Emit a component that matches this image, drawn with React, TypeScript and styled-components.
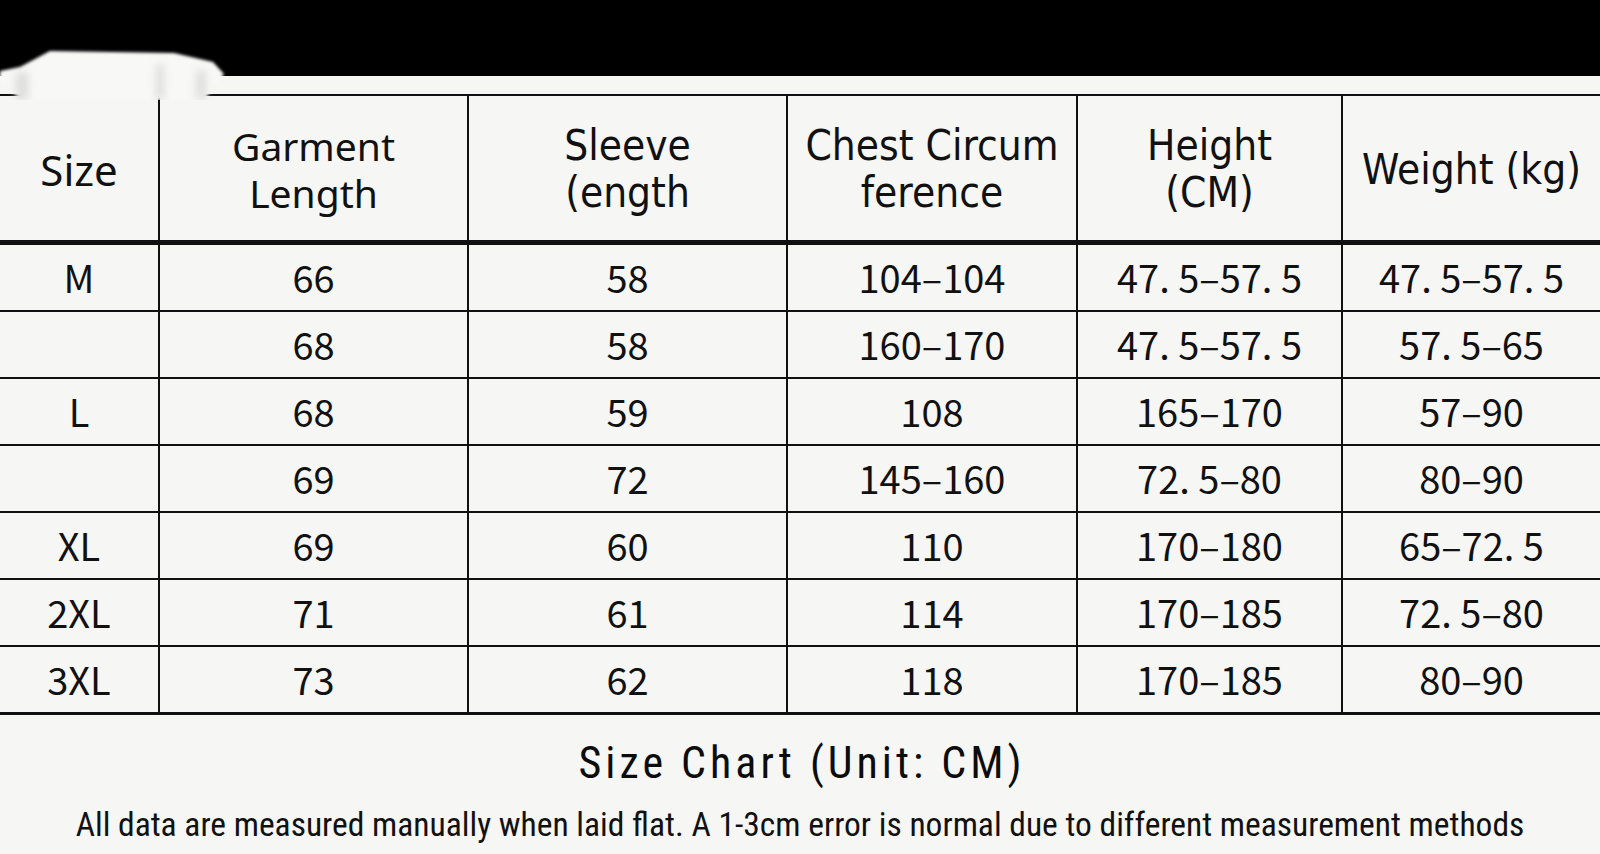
import React from "react";
import styled, { createGlobalStyle } from "styled-components";

const GlobalStyle = createGlobalStyle`
  html, body {
    margin: 0;
    padding: 0;
    background: #f6f6f4;
  }
  body {
    font-family: "Noto Sans", "Liberation Sans", sans-serif;
    color: #111;
  }
`;

const Page = styled.div`
  position: relative;
  width: 1600px;
  height: 854px;
  overflow: hidden;
  background: #f6f6f4;
  display: flex;
  flex-direction: column;
`;

const TopBand = styled.div`
  height: 76px;
  background: #000;
  flex: none;
`;

const Blob = styled.svg`
  position: absolute;
  left: 0;
  top: 44px;
  width: 240px;
  height: 56px;
`;

const Table = styled.div`
  margin-top: 18px;
  border-top: 2px solid #111;
  display: grid;
  grid-template-columns: 160px 309px 319px 290px 265px 1fr;
`;

const HeadCell = styled.div<{ $condensed?: boolean; $big?: boolean; $last?: boolean }>`
  box-sizing: border-box;
  height: 149px;
  border-bottom: 5px solid #111;
  border-right: ${(p) => (p.$last ? "none" : "2px solid #111")};
  display: flex;
  align-items: center;
  justify-content: center;
  text-align: center;
  padding-top: 2px;
  font-family: ${(p) =>
    p.$condensed
      ? `"DejaVu Sans Condensed", "DejaVu Sans", sans-serif`
      : `"Noto Sans", "Open Sans", sans-serif`};
  font-stretch: ${(p) => (p.$condensed ? "condensed" : "normal")};
  font-size: ${(p) => (p.$big ? "42px" : p.$condensed ? "42px" : "39px")};
  line-height: 47px;
  white-space: pre-line;
  color: #111;
`;

const Cell = styled.div<{ $lastRow?: boolean; $last?: boolean }>`
  box-sizing: border-box;
  height: ${(p) => (p.$lastRow ? "68px" : "67px")};
  border-bottom: ${(p) => (p.$lastRow ? "3px" : "2px")} solid #111;
  border-right: ${(p) => (p.$last ? "none" : "2px solid #111")};
  display: flex;
  align-items: center;
  justify-content: center;
  padding-bottom: 2px;
  font-family: "Noto Sans CJK JP", "Noto Sans", sans-serif;
  font-size: 38px;
  line-height: 1;
  white-space: pre;
  color: #111;
`;

const Footer = styled.div`
  display: flex;
  flex-direction: column;
  align-items: center;
`;

const Title = styled.div`
  margin-top: 24px;
  padding-left: 4px;
  font-family: "Roboto Condensed", "DejaVu Sans Condensed", sans-serif;
  font-weight: 400;
  font-size: 44px;
  letter-spacing: 4px;
  line-height: 48px;
  color: #0c0c0c;
  white-space: pre;
`;

const Note = styled.div`
  margin-top: 18px;
  font-family: "Roboto Condensed", "DejaVu Sans Condensed", sans-serif;
  font-size: 33.5px;
  line-height: 40px;
  color: #111;
  white-space: nowrap;
`;

const headers: { text: string; condensed?: boolean; big?: boolean }[] = [
  { text: "Size", big: true },
  { text: "Garment\nLength" },
  { text: "Sleeve\n(ength", condensed: true },
  { text: "Chest Circum\nference", condensed: true },
  { text: "Height\n(CM)", condensed: true },
  { text: "Weight (kg)", condensed: true },
];

const rows: string[][] = [
  ["M", "66", "58", "104–104", "47. 5–57. 5", "47. 5–57. 5"],
  ["", "68", "58", "160–170", "47. 5–57. 5", "57. 5–65"],
  ["L", "68", "59", "108", "165–170", "57–90"],
  ["", "69", "72", "145–160", "72. 5–80", "80–90"],
  ["XL", "69", "60", "110", "170–180", "65–72. 5"],
  ["2XL", "71", "61", "114", "170–185", "72. 5–80"],
  ["3XL", "73", "62", "118", "170–185", "80–90"],
];

function ShirtBlob() {
  return (
    <Blob viewBox="0 0 240 56" aria-hidden="true">
      <defs>
        <filter id="soft" x="-20%" y="-40%" width="140%" height="180%">
          <feGaussianBlur stdDeviation="1.8" />
        </filter>
        <filter id="softer" x="-50%" y="-50%" width="200%" height="200%">
          <feGaussianBlur stdDeviation="4" />
        </filter>
      </defs>
      <g filter="url(#soft)">
        <path
          d="M0 27 L20 23 L50 7 L174 9 L213 18 L224 30 L204 56 L22 56 L0 38 Z"
          fill="#f8f8f7"
        />
      </g>
      <g filter="url(#softer)" opacity="0.5">
        <rect x="157" y="20" width="6" height="36" fill="#b0b0b0" />
        <rect x="16" y="28" width="12" height="28" fill="#c0c0c0" />
        <rect x="196" y="26" width="10" height="30" fill="#c4c4c4" />
      </g>
    </Blob>
  );
}

export default function App() {
  return (
    <>
      <GlobalStyle />
      <Page>
        <TopBand />
        <ShirtBlob />
        <Table>
          {headers.map((h, i) => (
            <HeadCell
              key={h.text}
              $condensed={h.condensed}
              $big={h.big}
              $last={i === headers.length - 1}
            >
              {h.text}
            </HeadCell>
          ))}
          {rows.map((r, ri) =>
            r.map((v, ci) => (
              <Cell
                key={`${ri}-${ci}`}
                $lastRow={ri === rows.length - 1}
                $last={ci === r.length - 1}
              >
                {v}
              </Cell>
            ))
          )}
        </Table>
        <Footer>
          <Title>Size Chart (Unit: CM)</Title>
          <Note>
            All data are measured manually when laid flat. A 1-3cm error is normal due to different
            measurement methods
          </Note>
        </Footer>
      </Page>
    </>
  );
}
